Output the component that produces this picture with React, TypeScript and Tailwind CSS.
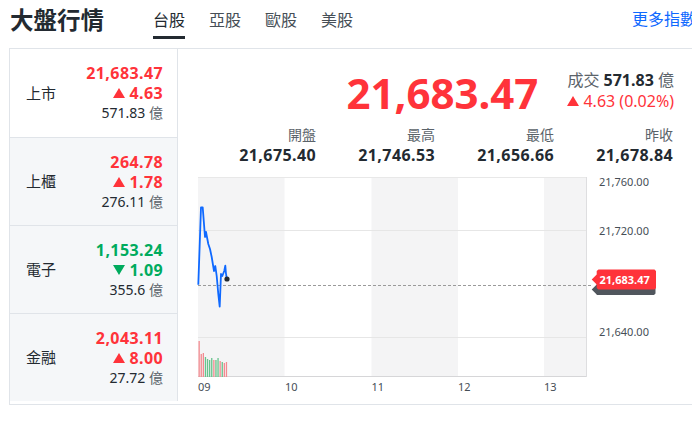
import React from 'react';

const UP = 'text-[#ff333a]';
const DOWN = 'text-[#00ab5e]';

type Row = { name: string; price: string; change: string; volume: string; up: boolean; active?: boolean };

const rows: Row[] = [
  { name: '上市', price: '21,683.47', change: '4.63', volume: '571.83', up: true, active: true },
  { name: '上櫃', price: '264.78', change: '1.78', volume: '276.11', up: true },
  { name: '電子', price: '1,153.24', change: '1.09', volume: '355.6', up: false },
  { name: '金融', price: '2,043.11', change: '8.00', volume: '27.72', up: true },
];

const stats = [
  { label: '開盤', value: '21,675.40' },
  { label: '最高', value: '21,746.53' },
  { label: '最低', value: '21,656.66' },
  { label: '昨收', value: '21,678.84' },
];

function Arrow({ up }: { up: boolean }) {
  return (
    <svg width="12" height="10" viewBox="0 0 12 10" className="shrink-0">
      {up ? <polygon points="6,0 12,10 0,10" fill="#ff333a" /> : <polygon points="0,0 12,0 6,10" fill="#00ab5e" />}
    </svg>
  );
}

const linePts =
  '198.3,285.7 201,208.3 202.7,208.3 205,238 206,233 208.3,245 210,250 211.7,258 214,272 215.3,267 216.7,277 218.3,295 219.7,307.7 221,275 222.3,277 224.3,271.7 225.3,266.7 226,275';

const bars: [number, number, boolean][] = [
  [198.5, 342, true],
  [200.6, 355, true],
  [202.7, 354, true],
  [204.8, 358, false],
  [206.9, 360, false],
  [209, 361, false],
  [211.1, 359, false],
  [213.2, 361, true],
  [215.3, 361, false],
  [217.4, 359, false],
  [219.5, 362, true],
  [221.6, 363, false],
  [223.7, 364, true],
  [225.8, 363, true],
];

function Chart() {
  const bands = [198, 371.5, 544];
  const hours = [
    { x: 198, t: '09' },
    { x: 285, t: '10' },
    { x: 371.5, t: '11' },
    { x: 458, t: '12' },
    { x: 544, t: '13' },
  ];
  return (
    <svg width="514" height="232" viewBox="178 170 514 232" className="block">
      {bands.map((x) => (
        <rect key={x} x={x} y={178} width={x === 544 ? 43 : 86.5} height={200} fill="#f4f4f5" />
      ))}
      <line x1={198} x2={587} y1={178.5} y2={178.5} stroke="#e8e8e8" />
      <line x1={198} x2={587} y1={231.5} y2={231.5} stroke="#e6e6e6" />
      <line x1={198} x2={587} y1={338.5} y2={338.5} stroke="#e6e6e6" />
      <line x1={198} x2={587} y1={377.5} y2={377.5} stroke="#d6d6d8" />
      <line x1={586.5} x2={586.5} y1={178} y2={378} stroke="#dedee0" />
      {bars.map(([x, y, up]) => (
        <rect key={x} x={x} y={y} width={1.3} height={378 - y} fill={up ? '#f38a90' : '#66c48c'} />
      ))}
      <line x1={198} x2={592} y1={286.5} y2={286.5} stroke="#9a9a9a" strokeDasharray="3 2" />
      <polyline points={linePts} fill="none" stroke="#0f69ff" strokeWidth={1.8} strokeLinejoin="round" />
      <line x1={226} y1={275} x2={226.8} y2={279.5} stroke="#0f69ff" strokeWidth={1.8} />
      <circle cx={227} cy={280} r={2.6} fill="#232a31" />

      <g fontFamily="'Noto Sans', 'Liberation Sans', sans-serif" fontSize="11" fill="#464e56">
        <text x={599} y={187}>21,760.00</text>
        <text x={599} y={235.5}>21,720.00</text>
        <text x={599} y={336.5}>21,640.00</text>
        {hours.map((h) => (
          <text key={h.t} x={h.x} y={392}>
            {h.t}
          </text>
        ))}
      </g>

      {/* previous close tag, mostly hidden behind the live tag */}
      <polygon points="591.7,290.5 596.7,285.5 596.7,284 654,284 655.5,285.5 655.5,294.5 654,296 596.7,296 596.7,295.5" fill="#50565d" />
      <polygon
        points="591.7,280.5 596.7,275.5 596.7,272 598.5,270.5 654.5,270.5 656,272 656,289 654.5,290.5 598.5,290.5 596.7,289 596.7,285.5"
        fill="#ff333a"
      />
      <text x={599.5} y={284.5} fontFamily="'Noto Sans', sans-serif" fontSize="11" fontWeight="700" fill="#ffffff">
        21,683.47
      </text>
    </svg>
  );
}

export default function App() {
  return (
    <div className="relative w-[692px] h-[421px] overflow-hidden bg-white text-[#232a31] font-['Noto_Sans','Noto_Sans_CJK_TC',sans-serif]">
      {/* Header */}
      <div className="flex items-start h-[48px] pl-[10px]">
        <h1 className="text-[23.5px] font-bold leading-[30px] mt-[5px] text-[#232a31]">大盤行情</h1>
        <div className="flex gap-[24px] ml-[49px] mt-[8px]">
          <div className="flex flex-col items-center">
            <span className="text-[16px] leading-[24px] text-[#232a31]">台股</span>
            <span className="block w-[32px] h-[3px] bg-[#232a31] mt-[4px]" />
          </div>
          <span className="text-[16px] leading-[24px] text-[#464e56]">亞股</span>
          <span className="text-[16px] leading-[24px] text-[#464e56]">歐股</span>
          <span className="text-[16px] leading-[24px] text-[#464e56]">美股</span>
        </div>
        <a className="ml-auto mr-[-4px] mt-[7px] text-[16px] leading-[24px] text-[#0f69ff] whitespace-nowrap">更多指數</a>
      </div>

      {/* Card */}
      <div className="ml-[9px] w-[700px] h-[357px] border border-[#e0e4e9] flex">
        <div className="w-[168px] shrink-0 border-r border-[#e0e4e9] flex flex-col self-start">
          {rows.map((r, i) => (
            <div
              key={r.name}
              className={`h-[88px] flex items-center justify-between pl-[16px] pr-[14px] ${
                i > 0 ? 'border-t border-[#e0e4e9] bg-[#f5f7f9]' : 'bg-white'
              }`}
            >
              <span className="text-[15px] text-[#232a31]">{r.name}</span>
              <div className="flex flex-col items-end">
                <span className={`text-[16px] tracking-[0.4px] font-bold leading-[20px] ${r.up ? UP : DOWN}`}>{r.price}</span>
                <span className={`flex items-center gap-[4px] text-[16px] tracking-[0.4px] font-bold leading-[20px] ${r.up ? UP : DOWN}`}>
                  <Arrow up={r.up} />
                  {r.change}
                </span>
                <span className="text-[14px] leading-[20px] text-[#232a31]">
                  {r.volume} <span className="text-[#5b636a]">億</span>
                </span>
              </div>
            </div>
          ))}
        </div>

        <div className="flex-1 flex flex-col">
          <div className="h-[76px] pt-[12px] flex items-center justify-end gap-[29px] pr-[34px]">
            <span className={`text-[42px] font-bold leading-none ${UP}`}>21,683.47</span>
            <div className="flex flex-col items-end mb-[5px]">
              <span className="text-[16px] leading-[21px] text-[#5b636a]">
                成交 <span className="font-bold text-[#232a31]">571.83</span> 億
              </span>
              <span className={`flex items-center gap-[4px] text-[16px] leading-[21px] ${UP}`}>
                <Arrow up />
                4.63 (0.02%)
              </span>
            </div>
          </div>
          <div className="grid grid-cols-4 w-[476px] ml-[19px] h-[44px]">
            {stats.map((s) => (
              <div key={s.label} className="flex flex-col items-end">
                <span className="text-[14px] leading-[20px] text-[#5b636a]">{s.label}</span>
                <span className="text-[16px] tracking-[0.4px] font-bold leading-[20px] text-[#232a31]">{s.value}</span>
              </div>
            ))}
          </div>
          <Chart />
        </div>
      </div>
    </div>
  );
}
